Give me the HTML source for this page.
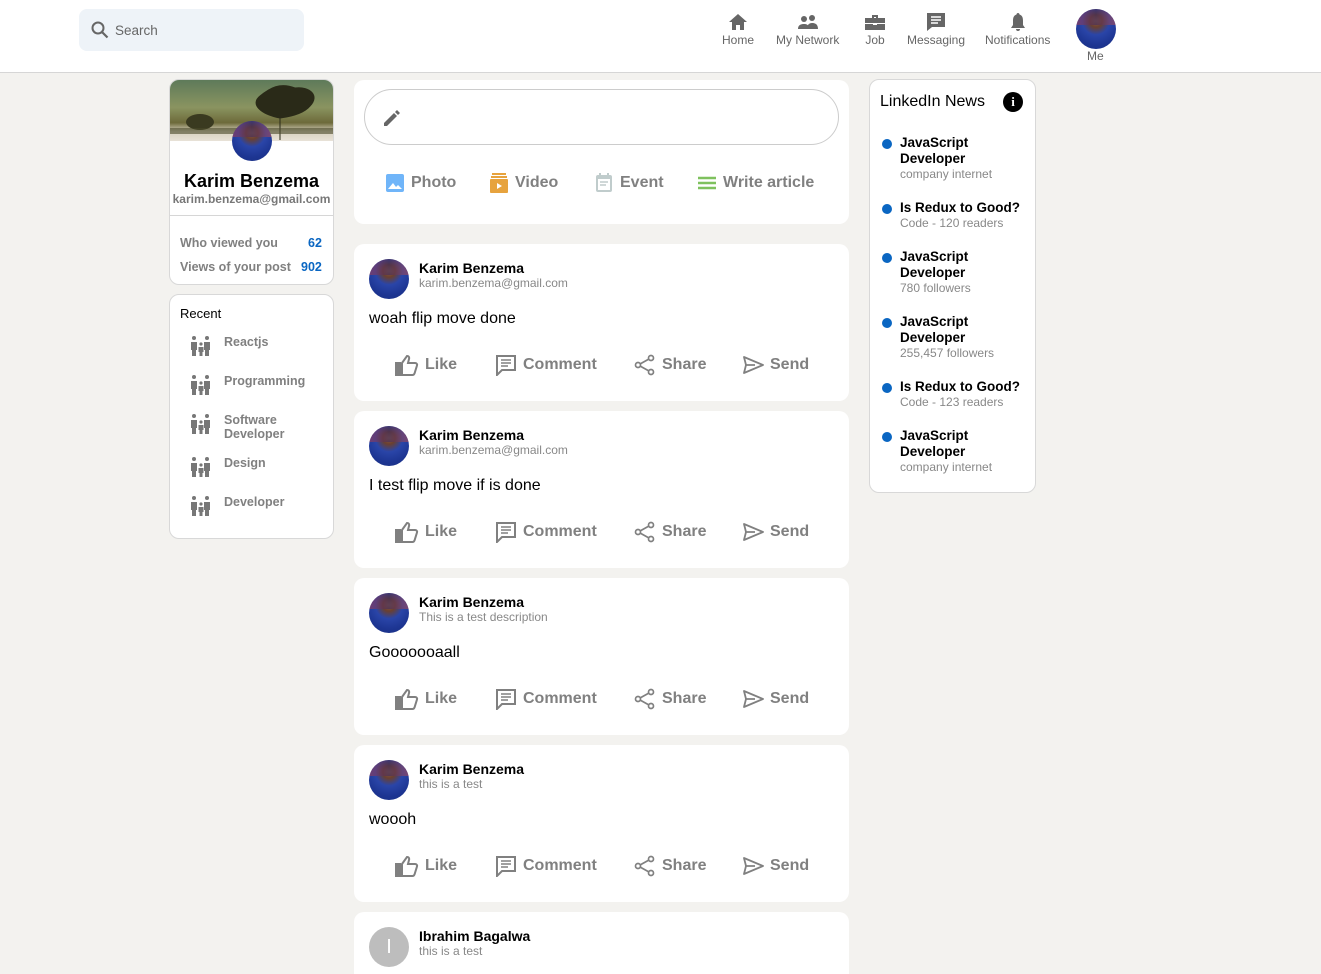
<!DOCTYPE html>
<html><head><meta charset="utf-8"><style>
*{box-sizing:border-box;margin:0;padding:0}
html,body{width:1321px;height:974px;overflow:hidden}
body{background:#f3f2ef;font-family:"Liberation Sans",sans-serif;position:relative;color:#000}
.a{position:absolute}
.hdr{left:0;top:0;width:1321px;height:73px;background:#fff;border-bottom:1px solid #d6d6d6}
.search{left:79px;top:9px;width:225px;height:42px;background:#eef3f8;border-radius:8px}
.nav{top:12px;text-align:center;color:#666;font-size:12px}
.nav svg{display:block;margin:0 auto 1px}
.card{background:#fff;border:1px solid #d8d8d8;border-radius:10px}
.av{border-radius:50%;background:radial-gradient(circle at 50% 30%,#8a5a45 0,#6a4030 18%,#2a45a8 40%,#1d3592 70%,#1a2f80 100%);overflow:hidden}
.av:before{content:"";position:absolute;left:0;top:0;width:100%;height:40%;background:linear-gradient(90deg,#b04050,#3a2a60 50%,#c05050);opacity:.55;border-radius:50% 50% 0 0}
.post{left:354px;width:495px;height:157px;background:#fff;border-radius:10px}
.post .pa{position:absolute;left:15px;top:15px;width:40px;height:40px}
.post .nm{position:absolute;left:65px;top:16px;font-size:14px;font-weight:bold}
.post .sb{position:absolute;left:65px;top:32px;font-size:12px;color:#888}
.post .tx{position:absolute;left:15px;top:66px;font-size:16px}
.act{position:absolute;top:110px;font-size:16px;font-weight:bold;color:#808080;display:flex;align-items:center;gap:6px}
.rc{position:absolute;left:20px;display:flex;gap:12px;font-size:12.5px;font-weight:bold;color:#808080;line-height:14px}
.nw{position:absolute;left:30px;font-size:13.5px;font-weight:bold;line-height:16px}
.nw:before{content:"";position:absolute;left:-18px;top:4px;width:10px;height:10px;border-radius:50%;background:#0a66c2}
.nw span{display:block;font-weight:normal;font-size:12px;color:#888;line-height:14px}
</style></head><body>
<div class="a hdr"></div>
<div class="a search"><svg class="a" style="left:12px;top:12px" width="18" height="18" viewBox="0 0 18 18"><circle cx="7" cy="7" r="5.5" fill="none" stroke="#666" stroke-width="2"/><path d="M11 11l5.5 5.5" stroke="#666" stroke-width="2.2"/></svg><span class="a" style="left:36px;top:14px;font-size:13.5px;color:#666">Search</span></div>

<div class="a nav" style="left:722px"><svg width="22" height="20" viewBox="0 0 22 20"><path d="M11 2L2 10h3v8h4v-5h4v5h4v-8h3z" fill="#666"/></svg>Home</div>
<div class="a nav" style="left:776px"><svg width="22" height="20" viewBox="0 0 22 20"><circle cx="7" cy="7" r="3" fill="#666"/><circle cx="15" cy="6" r="3" fill="#666"/><path d="M1 17c0-4 3-5 6-5s5 1 5 5zM10 17c0-4 2-6 5-6s6 1 6 6z" fill="#666"/></svg>My Network</div>
<div class="a nav" style="left:864px"><svg width="22" height="20" viewBox="0 0 22 20"><path d="M8 3h6v3h-2V5h-2v1H8z M1 6h20v5H1z M1 12h8v1h4v-1h8v6H1z" fill="#666"/></svg>Job</div>
<div class="a nav" style="left:907px"><svg width="22" height="20" viewBox="0 0 22 20"><path d="M2 1h18v14H7l-5 4z" fill="#666"/><path d="M6 5h10M6 8h10M6 11h7" stroke="#fff" stroke-width="1.5"/></svg>Messaging</div>
<div class="a nav" style="left:985px"><svg width="22" height="20" viewBox="0 0 22 20"><path d="M11 1c-1 0-1.5.8-1.5 1.5C6.5 3.5 6 6 6 9v4l-2 3h14l-2-3V9c0-3-.5-5.5-3.5-6.5C12.5 1.8 12 1 11 1zM9 17h4a2 2 0 0 1-4 0z" fill="#666"/></svg>Notifications</div>
<div class="a av" style="left:1076px;top:9px;width:40px;height:40px"></div>
<div class="a" style="left:1087px;top:49px;font-size:12px;color:#666">Me</div>

<div class="a card" style="left:169px;top:79px;width:165px;height:206px;overflow:hidden">
 <div class="a" style="left:0;top:0;width:165px;height:61px;background:linear-gradient(180deg,#5e7a5a 0,#8a9460 45%,#6d6a3a 70%,#d8d2c0 85%,#e8e2d8 100%)"></div>
 <svg class="a" style="left:0;top:0" width="165" height="61"><path d="M110 60V36M110 38c-20-4-30-14-20-22 10-8 20-14 35-8 15-2 25 8 15 18-5 6-15 10-30 12z" fill="#2a2a18" stroke="#2a2a18"/><ellipse cx="30" cy="42" rx="14" ry="8" fill="#3a3a20"/><rect x="0" y="48" width="165" height="6" fill="#4a4a2a" opacity=".6"/></svg>
 <div class="a av" style="left:62px;top:41px;width:40px;height:40px"></div>
 <div class="a" style="left:0;top:91px;width:163px;text-align:center;font-size:18px;font-weight:bold">Karim Benzema</div>
 <div class="a" style="left:0;top:112px;width:163px;text-align:center;font-size:12px;font-weight:bold;color:#777">karim.benzema@gmail.com</div>
 <div class="a" style="left:0;top:135px;width:165px;border-top:1px solid #d6d6d6"></div>
 <div class="a" style="left:10px;top:156px;font-size:12.5px;font-weight:bold;color:#808080">Who viewed you</div>
 <div class="a" style="left:138px;top:156px;font-size:12.5px;font-weight:bold;color:#0a66c2">62</div>
 <div class="a" style="left:10px;top:180px;font-size:12.5px;font-weight:bold;color:#808080">Views of your post</div>
 <div class="a" style="left:131px;top:180px;font-size:12.5px;font-weight:bold;color:#0a66c2">902</div>
</div>

<div class="a card" style="left:169px;top:294px;width:165px;height:245px">
 <div class="a" style="left:10px;top:11px;font-size:13px">Recent</div>
 <div class="rc" style="top:40px"><svg width="22" height="22" viewBox="0 0 22 22"><circle cx="4" cy="3" r="2" fill="#777"/><circle cx="17" cy="3" r="2" fill="#777"/><circle cx="11" cy="9" r="1.6" fill="#777"/><path d="M1 7h6v8H6v6H2v-6H1zM14 7h6v8h-1v6h-4v-6h-1zM8.5 12h5v5h-1v4h-3v-4h-1z" fill="#777"/></svg><span>Reactjs</span></div>
 <div class="rc" style="top:79px"><svg width="22" height="22" viewBox="0 0 22 22"><circle cx="4" cy="3" r="2" fill="#777"/><circle cx="17" cy="3" r="2" fill="#777"/><circle cx="11" cy="9" r="1.6" fill="#777"/><path d="M1 7h6v8H6v6H2v-6H1zM14 7h6v8h-1v6h-4v-6h-1zM8.5 12h5v5h-1v4h-3v-4h-1z" fill="#777"/></svg><span>Programming</span></div>
 <div class="rc" style="top:118px"><svg width="22" height="22" viewBox="0 0 22 22"><circle cx="4" cy="3" r="2" fill="#777"/><circle cx="17" cy="3" r="2" fill="#777"/><circle cx="11" cy="9" r="1.6" fill="#777"/><path d="M1 7h6v8H6v6H2v-6H1zM14 7h6v8h-1v6h-4v-6h-1zM8.5 12h5v5h-1v4h-3v-4h-1z" fill="#777"/></svg><span>Software<br>Developer</span></div>
 <div class="rc" style="top:161px"><svg width="22" height="22" viewBox="0 0 22 22"><circle cx="4" cy="3" r="2" fill="#777"/><circle cx="17" cy="3" r="2" fill="#777"/><circle cx="11" cy="9" r="1.6" fill="#777"/><path d="M1 7h6v8H6v6H2v-6H1zM14 7h6v8h-1v6h-4v-6h-1zM8.5 12h5v5h-1v4h-3v-4h-1z" fill="#777"/></svg><span>Design</span></div>
 <div class="rc" style="top:200px"><svg width="22" height="22" viewBox="0 0 22 22"><circle cx="4" cy="3" r="2" fill="#777"/><circle cx="17" cy="3" r="2" fill="#777"/><circle cx="11" cy="9" r="1.6" fill="#777"/><path d="M1 7h6v8H6v6H2v-6H1zM14 7h6v8h-1v6h-4v-6h-1zM8.5 12h5v5h-1v4h-3v-4h-1z" fill="#777"/></svg><span>Developer</span></div>
</div>

<div class="a" style="left:354px;top:80px;width:495px;height:144px;background:#fff;border-radius:10px">
 <div class="a" style="left:10px;top:9px;width:475px;height:56px;border:1px solid #ccc;border-radius:28px"></div>
 <svg class="a" style="left:28px;top:28px" width="20" height="20" viewBox="0 0 20 20"><path d="M2 15v3h3l10-10-3-3zM13 4l3 3 2-2-3-3z" fill="#666"/></svg>
 <div class="act" style="left:31px;top:93px"><svg width="20" height="20" viewBox="0 0 20 20"><rect x="1" y="1" width="18" height="18" rx="2" fill="#70b5f9"/><path d="M3 16l5-6 3 4 2-2 4 4z" fill="#fff"/></svg>Photo</div>
 <div class="act" style="left:135px;top:93px"><svg width="20" height="20" viewBox="0 0 20 20"><rect x="3" y="0" width="14" height="2" fill="#e7a33e"/><rect x="2" y="3" width="16" height="2" fill="#e7a33e"/><rect x="1" y="6" width="18" height="14" rx="1" fill="#e7a33e"/><path d="M8 10l5 3-5 3z" fill="#fff"/></svg>Video</div>
 <div class="act" style="left:240px;top:93px"><svg width="20" height="20" viewBox="0 0 20 20"><rect x="2" y="2" width="16" height="17" rx="2" fill="#c0cccc"/><rect x="4" y="6" width="12" height="11" fill="#fff"/><path d="M6 9h8M6 12h6" stroke="#c0cccc" stroke-width="1.5"/><rect x="5" y="0" width="2" height="4" fill="#c0cccc"/><rect x="13" y="0" width="2" height="4" fill="#c0cccc"/></svg>Event</div>
 <div class="act" style="left:343px;top:93px"><svg width="20" height="20" viewBox="0 0 20 20"><path d="M1 5h18M1 10h18M1 15h18" stroke="#7fc15e" stroke-width="2.5"/></svg>Write article</div>
</div>

<div class="a post" style="top:244px"><div class="av pa"></div><div class="nm">Karim Benzema</div><div class="sb">karim.benzema@gmail.com</div><div class="tx">woah flip move done</div>
<div class="act" style="left:41px"><svg width="24" height="22" viewBox="0 0 24 22"><path d="M1 9h4v12H1zM7 9l5-7c2 0 2.5 1.5 2 3l-1 4h7c1.5 0 2.5 1.2 2 2.5l-2.5 8c-.4 1-1 1.5-2 1.5H7z" fill="none" stroke="#808080" stroke-width="2"/><rect x="1" y="9" width="4" height="12" fill="#808080"/></svg>Like</div>
<div class="act" style="left:141px"><svg width="22" height="22" viewBox="0 0 22 22"><path d="M2 2h18v14H7l-5 5z" fill="none" stroke="#808080" stroke-width="2"/><path d="M6 6h10M6 9h10M6 12h7" stroke="#808080" stroke-width="1.6"/></svg>Comment</div>
<div class="act" style="left:280px"><svg width="22" height="22" viewBox="0 0 22 22"><circle cx="17" cy="4" r="2.5" fill="none" stroke="#808080" stroke-width="1.7"/><circle cx="4" cy="11" r="2.5" fill="none" stroke="#808080" stroke-width="1.7"/><circle cx="17" cy="18" r="2.5" fill="none" stroke="#808080" stroke-width="1.7"/><path d="M6 10l9-5M6 12l9 5" stroke="#808080" stroke-width="1.7"/></svg>Share</div>
<div class="act" style="left:388px"><svg width="22" height="22" viewBox="0 0 22 22"><path d="M2 3l19 8-19 8 2-8zM4 11h9" fill="none" stroke="#808080" stroke-width="1.8" stroke-linejoin="round"/></svg>Send</div></div>

<div class="a post" style="top:411px"><div class="av pa"></div><div class="nm">Karim Benzema</div><div class="sb">karim.benzema@gmail.com</div><div class="tx">I test flip move if is done</div>
<div class="act" style="left:41px"><svg width="24" height="22" viewBox="0 0 24 22"><path d="M1 9h4v12H1zM7 9l5-7c2 0 2.5 1.5 2 3l-1 4h7c1.5 0 2.5 1.2 2 2.5l-2.5 8c-.4 1-1 1.5-2 1.5H7z" fill="none" stroke="#808080" stroke-width="2"/><rect x="1" y="9" width="4" height="12" fill="#808080"/></svg>Like</div>
<div class="act" style="left:141px"><svg width="22" height="22" viewBox="0 0 22 22"><path d="M2 2h18v14H7l-5 5z" fill="none" stroke="#808080" stroke-width="2"/><path d="M6 6h10M6 9h10M6 12h7" stroke="#808080" stroke-width="1.6"/></svg>Comment</div>
<div class="act" style="left:280px"><svg width="22" height="22" viewBox="0 0 22 22"><circle cx="17" cy="4" r="2.5" fill="none" stroke="#808080" stroke-width="1.7"/><circle cx="4" cy="11" r="2.5" fill="none" stroke="#808080" stroke-width="1.7"/><circle cx="17" cy="18" r="2.5" fill="none" stroke="#808080" stroke-width="1.7"/><path d="M6 10l9-5M6 12l9 5" stroke="#808080" stroke-width="1.7"/></svg>Share</div>
<div class="act" style="left:388px"><svg width="22" height="22" viewBox="0 0 22 22"><path d="M2 3l19 8-19 8 2-8zM4 11h9" fill="none" stroke="#808080" stroke-width="1.8" stroke-linejoin="round"/></svg>Send</div></div>

<div class="a post" style="top:578px"><div class="av pa"></div><div class="nm">Karim Benzema</div><div class="sb">This is a test description</div><div class="tx">Gooooooaall</div>
<div class="act" style="left:41px"><svg width="24" height="22" viewBox="0 0 24 22"><path d="M1 9h4v12H1zM7 9l5-7c2 0 2.5 1.5 2 3l-1 4h7c1.5 0 2.5 1.2 2 2.5l-2.5 8c-.4 1-1 1.5-2 1.5H7z" fill="none" stroke="#808080" stroke-width="2"/><rect x="1" y="9" width="4" height="12" fill="#808080"/></svg>Like</div>
<div class="act" style="left:141px"><svg width="22" height="22" viewBox="0 0 22 22"><path d="M2 2h18v14H7l-5 5z" fill="none" stroke="#808080" stroke-width="2"/><path d="M6 6h10M6 9h10M6 12h7" stroke="#808080" stroke-width="1.6"/></svg>Comment</div>
<div class="act" style="left:280px"><svg width="22" height="22" viewBox="0 0 22 22"><circle cx="17" cy="4" r="2.5" fill="none" stroke="#808080" stroke-width="1.7"/><circle cx="4" cy="11" r="2.5" fill="none" stroke="#808080" stroke-width="1.7"/><circle cx="17" cy="18" r="2.5" fill="none" stroke="#808080" stroke-width="1.7"/><path d="M6 10l9-5M6 12l9 5" stroke="#808080" stroke-width="1.7"/></svg>Share</div>
<div class="act" style="left:388px"><svg width="22" height="22" viewBox="0 0 22 22"><path d="M2 3l19 8-19 8 2-8zM4 11h9" fill="none" stroke="#808080" stroke-width="1.8" stroke-linejoin="round"/></svg>Send</div></div>

<div class="a post" style="top:745px"><div class="av pa"></div><div class="nm">Karim Benzema</div><div class="sb">this is a test</div><div class="tx">woooh</div>
<div class="act" style="left:41px"><svg width="24" height="22" viewBox="0 0 24 22"><path d="M1 9h4v12H1zM7 9l5-7c2 0 2.5 1.5 2 3l-1 4h7c1.5 0 2.5 1.2 2 2.5l-2.5 8c-.4 1-1 1.5-2 1.5H7z" fill="none" stroke="#808080" stroke-width="2"/><rect x="1" y="9" width="4" height="12" fill="#808080"/></svg>Like</div>
<div class="act" style="left:141px"><svg width="22" height="22" viewBox="0 0 22 22"><path d="M2 2h18v14H7l-5 5z" fill="none" stroke="#808080" stroke-width="2"/><path d="M6 6h10M6 9h10M6 12h7" stroke="#808080" stroke-width="1.6"/></svg>Comment</div>
<div class="act" style="left:280px"><svg width="22" height="22" viewBox="0 0 22 22"><circle cx="17" cy="4" r="2.5" fill="none" stroke="#808080" stroke-width="1.7"/><circle cx="4" cy="11" r="2.5" fill="none" stroke="#808080" stroke-width="1.7"/><circle cx="17" cy="18" r="2.5" fill="none" stroke="#808080" stroke-width="1.7"/><path d="M6 10l9-5M6 12l9 5" stroke="#808080" stroke-width="1.7"/></svg>Share</div>
<div class="act" style="left:388px"><svg width="22" height="22" viewBox="0 0 22 22"><path d="M2 3l19 8-19 8 2-8zM4 11h9" fill="none" stroke="#808080" stroke-width="1.8" stroke-linejoin="round"/></svg>Send</div></div>

<div class="a post" style="top:912px;height:62px;border-radius:10px 10px 0 0"><div class="pa" style="border-radius:50%;background:#bdbdbd;color:#fff;font-size:20px;text-align:center;line-height:40px">I</div><div class="nm">Ibrahim Bagalwa</div><div class="sb">this is a test</div></div>

<div class="a card" style="left:869px;top:79px;width:167px;height:414px">
 <div class="a" style="left:10px;top:13px;font-size:16px">LinkedIn News</div>
 <div class="a" style="left:133px;top:12px;width:20px;height:20px;border-radius:50%;background:#000;color:#fff;font-size:13px;font-weight:bold;text-align:center;line-height:20px;font-family:'Liberation Serif',serif">i</div>
 <div class="nw" style="top:55px">JavaScript<br>Developer<span>company internet</span></div>
 <div class="nw" style="top:120px">Is Redux to Good?<span>Code - 120 readers</span></div>
 <div class="nw" style="top:169px">JavaScript<br>Developer<span>780 followers</span></div>
 <div class="nw" style="top:234px">JavaScript<br>Developer<span>255,457 followers</span></div>
 <div class="nw" style="top:299px">Is Redux to Good?<span>Code - 123 readers</span></div>
 <div class="nw" style="top:348px">JavaScript<br>Developer<span>company internet</span></div>
</div>
</body></html>
